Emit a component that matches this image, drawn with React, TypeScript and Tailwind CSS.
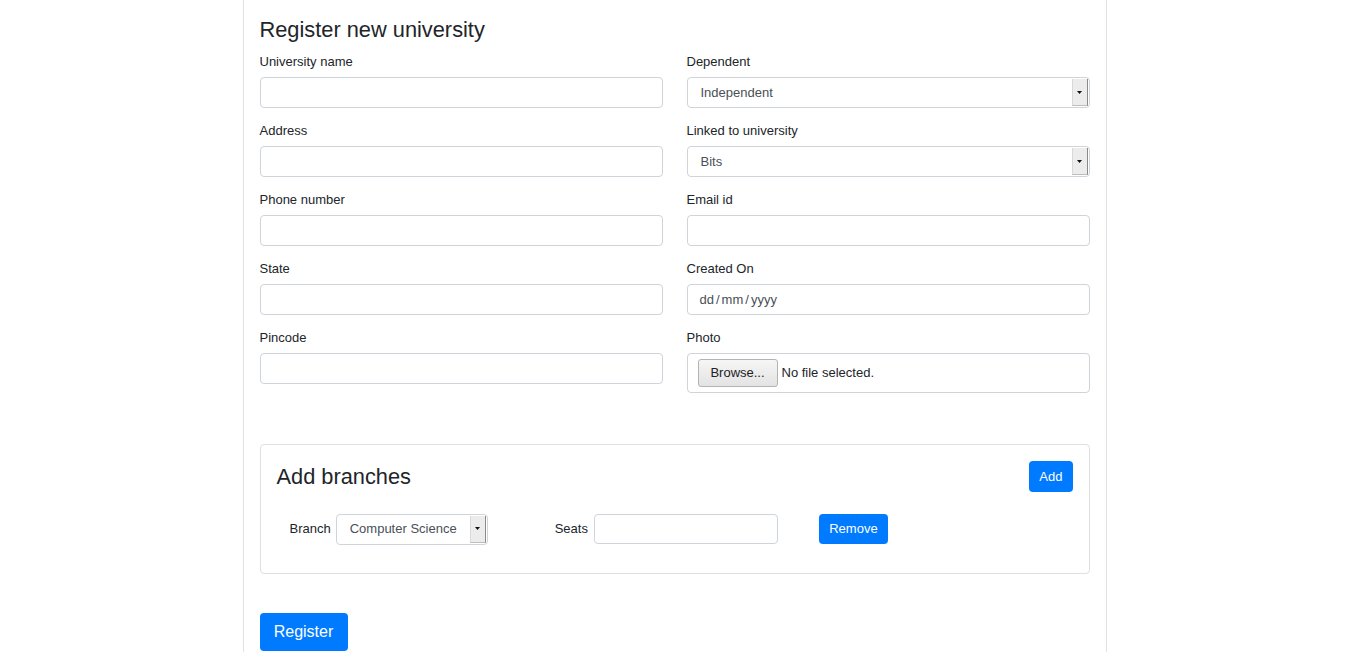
import React from 'react'

const font = { fontFamily: '"Liberation Sans", Arial, sans-serif' }

function Arrow() {
  return (
    <div className="flex w-[16px] items-center justify-center self-stretch my-px mr-px bg-[#ececec] border-l border-[#d8d8d8] border-r border-r-[#8a8a8a] border-b border-b-[#bdbdbd]">
      <svg width="5" height="3" viewBox="0 0 5 3">
        <path d="M0 0h5L2.5 3z" fill="#111" />
      </svg>
    </div>
  )
}

function Select(props: { value: string; className?: string }) {
  return (
    <div
      className={`flex items-center h-[31px] border border-[#ced4da] rounded-[4px] bg-white ${props.className ?? ''}`}
    >
      <span className="flex-1 pl-[13px] text-[13px] text-[#495057] truncate">{props.value}</span>
      <Arrow />
    </div>
  )
}

function Field(props: { label: string; children?: React.ReactNode }) {
  return (
    <div className="mb-[12px]">
      <label className="block h-[21px] leading-[21px] mb-[5px] text-[13px] text-[#212529]">{props.label}</label>
      {props.children ?? <input className="block w-full h-[31px] border border-[#ced4da] rounded-[4px] bg-white outline-none" />}
    </div>
  )
}

export default function App() {
  return (
    <div className="bg-white w-full h-[652px] overflow-hidden" style={font}>
      <div className="flex justify-center pr-[17px]">
        <div className="w-[864px] h-[652px] border-x border-[#dee2e6] px-4 pt-4">
          <h3 className="mt-px mb-[8px] text-[21.8px] leading-[26px] text-[#212529]">Register new university</h3>

          <div className="grid grid-cols-2 gap-x-6">
            <div>
              <Field label="University name" />
              <Field label="Address" />
              <Field label="Phone number" />
              <Field label="State" />
              <Field label="Pincode" />
            </div>
            <div>
              <Field label="Dependent">
                <Select value="Independent" />
              </Field>
              <Field label="Linked to university">
                <Select value="Bits" />
              </Field>
              <Field label="Email id" />
              <Field label="Created On">
                <div className="flex items-center h-[31px] border border-[#ced4da] rounded-[4px] bg-white pl-[12px] text-[13px] text-[#495057]">
                  dd<span className="mx-[2px]">/</span>mm<span className="mx-[2px]">/</span>yyyy
                </div>
              </Field>
              <Field label="Photo">
                <div className="flex items-center h-[40px] border border-[#ced4da] rounded-[4px] bg-white pl-[10px] text-[13px] text-[#212529]">
                  <button className="h-[28px] w-[80px] rounded-[3px] border border-[#b3b3b3] bg-gradient-to-b from-[#f6f6f6] to-[#e3e3e3] text-[13px] text-[#222]">
                    Browse...
                  </button>
                  <span className="ml-[4px]">No file selected.</span>
                </div>
              </Field>
            </div>
          </div>

          <div className="mt-[39px] border border-[#dfdfdf] rounded-[4px] px-4 pt-4 pb-[29px]">
            <div className="flex items-center justify-between h-[31px]">
              <h4 className="text-[21.8px] leading-[26px] text-[#212529]">Add branches</h4>
              <button className="h-[31px] px-[10px] rounded-[4px] bg-[#007bff] text-white text-[13px]">Add</button>
            </div>
            <div className="flex items-center mt-[22px] pl-[13px] h-[30px]">
              <span className="text-[13px] text-[#212529] mr-[5px]">Branch</span>
              <Select value="Computer Science" className="w-[152px] h-[30px]" />
              <span className="ml-[67px] text-[13px] text-[#212529] mr-[6px]">Seats</span>
              <input className="w-[184px] h-[30px] border border-[#ced4da] rounded-[4px] bg-white outline-none" />
              <button className="ml-[41px] h-[30px] w-[69px] rounded-[4px] bg-[#007bff] text-white text-[13px]">Remove</button>
            </div>
          </div>

          <button className="mt-[39px] h-[38px] w-[88px] rounded-[4px] bg-[#007bff] text-white text-[16px]">Register</button>
        </div>
      </div>
    </div>
  )
}
